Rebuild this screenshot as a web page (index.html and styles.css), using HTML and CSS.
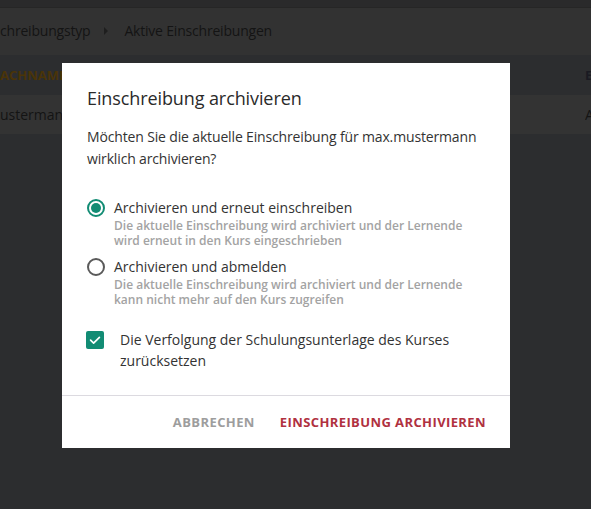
FILE: index.html
```html
<!DOCTYPE html>
<html lang="de">
<head>
<meta charset="utf-8">
<title>Einschreibung archivieren</title>
<link rel="stylesheet" href="styles.css">
</head>
<body>
<div class="page">
  <div class="topbar"></div>
  <div class="crumbs">
    <span>chreibungstyp</span>
    <span class="caret"></span>
    <span>Aktive Einschreibungen</span>
  </div>
  <div class="thead">
    <span class="th">ACHNAME</span>
    <span class="th">E</span>
  </div>
  <div class="trow">
    <span>usterman</span>
    <span>A</span>
  </div>
</div>

<div class="modal" role="dialog">
  <div class="modal-body">
    <h2 class="title">Einschreibung archivieren</h2>
    <p class="question">Möchten Sie die aktuelle Einschreibung für max.mustermann wirklich archivieren?</p>

    <div class="option">
      <span class="radio checked"></span>
      <div class="opt-text">
        <div class="opt-label">Archivieren und erneut einschreiben</div>
        <div class="opt-desc">Die aktuelle Einschreibung wird archiviert und der Lernende wird erneut in den Kurs eingeschrieben</div>
      </div>
    </div>

    <div class="option second">
      <span class="radio"></span>
      <div class="opt-text">
        <div class="opt-label">Archivieren und abmelden</div>
        <div class="opt-desc">Die aktuelle Einschreibung wird archiviert und der Lernende kann nicht mehr auf den Kurs zugreifen</div>
      </div>
    </div>

    <div class="check-row">
      <span class="checkbox">
        <svg viewBox="0 0 18 18" width="18" height="18"><path d="M4.6 9.2 L7.6 12.1 L13.4 6.3" fill="none" stroke="#fff" stroke-width="1.7" stroke-linecap="round" stroke-linejoin="round"/></svg>
      </span>
      <div class="check-label">Die Verfolgung der Schulungsunterlage des Kurses zurücksetzen</div>
    </div>
  </div>
  <div class="modal-footer">
    <span class="btn cancel">ABBRECHEN</span>
    <span class="btn confirm">EINSCHREIBUNG ARCHIVIEREN</span>
  </div>
</div>
</body>
</html>
```

FILE: styles.css
```css
html, body {
  margin: 0;
  padding: 0;
}
body {
  background: #2c2d2f;
  font-family: "Open Sans", "Noto Sans", sans-serif;
  width: 591px;
  height: 509px;
  overflow: hidden;
  position: relative;
}
.page {
  display: flex;
  flex-direction: column;
}
.topbar {
  height: 8px;
  background: #2a2a2b;
  border-bottom: 1px solid #262626;
  box-sizing: border-box;
}
.crumbs {
  height: 47px;
  background: #323232;
  display: flex;
  align-items: center;
  gap: 10px;
  font-size: 14px;
  letter-spacing: -0.2px;
  color: #141414;
  padding-bottom: 2px;
  box-sizing: border-box;
}
.caret {
  width: 0;
  height: 0;
  border-top: 4px solid transparent;
  border-bottom: 4px solid transparent;
  border-left: 4px solid #1e1e1e;
  margin: 0 6px 0 4px;
}
.thead {
  height: 40px;
  background: #2c2d2f;
  display: flex;
  justify-content: space-between;
  align-items: center;
  font-size: 13px;
  font-weight: 700;
  color: #4a3408;
}
.thead .th:last-child {
  color: #1a1a22;
}
.trow {
  height: 39px;
  background: #333333;
  display: flex;
  justify-content: space-between;
  align-items: center;
  font-size: 14px;
  color: #141414;
}
.trow span:last-child,
.thead span:last-child {
  width: 6px;
  overflow: hidden;
}

.modal {
  position: absolute;
  left: 62px;
  top: 63px;
  width: 448px;
  height: 385px;
  background: #fff;
  display: flex;
  flex-direction: column;
  box-sizing: border-box;
}
.modal-body {
  padding: 23px 24px 0 25px;
  flex: 1;
  border-bottom: 1px solid #dcdae0;
}
.title {
  margin: 0;
  font-size: 18px;
  line-height: 24px;
  font-weight: 500;
  letter-spacing: -0.1px;
  color: #2a2a2a;
}
.question {
  margin: 16px 0 0;
  font-size: 14px;
  line-height: 22px;
  letter-spacing: -0.15px;
  color: #333;
}
.option {
  display: flex;
  align-items: flex-start;
  gap: 9px;
  margin-top: 28px;
}
.option.second {
  margin-top: 9px;
}
.radio {
  flex: none;
  width: 18px;
  height: 18px;
  border: 2px solid #5a5a5a;
  border-radius: 50%;
  box-sizing: border-box;
  margin-top: 1px;
  position: relative;
}
.radio.checked {
  border-color: #128c74;
}
.radio.checked::after {
  content: "";
  position: absolute;
  left: 2px;
  top: 2px;
  width: 10px;
  height: 10px;
  border-radius: 50%;
  background: #128c74;
}
.opt-label {
  font-size: 14px;
  line-height: 20px;
  color: #333;
}
.opt-desc {
  font-size: 12px;
  line-height: 15px;
  font-weight: 600;
  color: #a3a3a3;
  max-width: 355px;
}
.check-row {
  display: flex;
  align-items: flex-start;
  gap: 16px;
  margin-top: 22px;
  margin-left: -1px;
}
.checkbox {
  flex: none;
  width: 18px;
  height: 18px;
  border-radius: 2px;
  background: #128c74;
  margin-top: 2px;
  display: flex;
}
.check-label {
  font-size: 14px;
  line-height: 21px;
  color: #333;
}
.modal-footer {
  height: 52px;
  display: flex;
  justify-content: flex-end;
  align-items: center;
  gap: 25px;
  padding-right: 24px;
}
.btn {
  font-size: 13px;
  font-weight: 700;
  letter-spacing: 0.4px;
}
.cancel {
  color: #9d9d9d;
}
.confirm {
  color: #b0313f;
}
```
